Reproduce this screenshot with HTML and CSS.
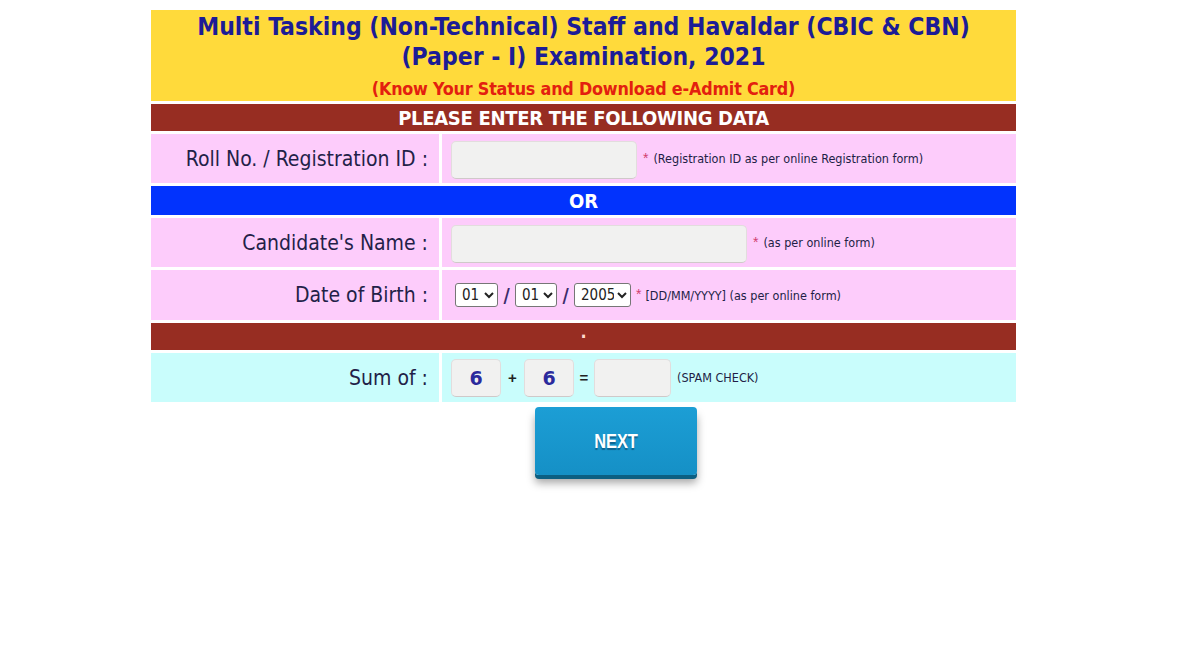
FILE: index.html
```html
<!DOCTYPE html>
<html lang="en">
<head>
<meta charset="utf-8">
<title>MTS Examination 2021 - e-Admit Card</title>
<link rel="stylesheet" href="styles.css">
</head>
<body>
<div class="page">
  <div class="header">
    <div class="t1">Multi Tasking (Non-Technical) Staff and Havaldar (CBIC &amp; CBN)</div>
    <div class="t1">(Paper - I) Examination, 2021</div>
    <div class="t2">(Know Your Status and Download e-Admit Card)</div>
  </div>
  <div class="band brown">PLEASE ENTER THE FOLLOWING DATA</div>
  <div class="row pink">
    <div class="label">Roll No. / Registration ID :</div>
    <div class="value">
      <input class="field w-roll" type="text">
      <span class="star">*</span><span class="hint">(Registration ID as per online Registration form)</span>
    </div>
  </div>
  <div class="band blue">OR</div>
  <div class="row pink">
    <div class="label">Candidate's Name :</div>
    <div class="value">
      <input class="field w-name" type="text">
      <span class="star">*</span><span class="hint">(as per online form)</span>
    </div>
  </div>
  <div class="row pink tall">
    <div class="label">Date of Birth :</div>
    <div class="value dob">
      <select class="sel s-day"><option>01</option></select>
      <span class="slash">/</span>
      <select class="sel s-mon"><option>01</option></select>
      <span class="slash">/</span>
      <select class="sel s-year"><option>2005</option></select>
      <span class="star">*</span><span class="hint">[DD/MM/YYYY] (as per online form)</span>
    </div>
  </div>
  <div class="band brown dotband">.</div>
  <div class="row cyan">
    <div class="label">Sum of :</div>
    <div class="value sum">
      <input class="field num" type="text" value="6" readonly>
      <span class="op">+</span>
      <input class="field num" type="text" value="6" readonly>
      <span class="op">=</span>
      <input class="field w-ans" type="text">
      <span class="hint spam">(SPAM CHECK)</span>
    </div>
  </div>
  <div class="actions">
    <button class="next" type="button"><span class="next-text">NEXT</span></button>
  </div>
</div>
</body>
</html>
```
FILE: styles.css
```css
body {
  margin: 0;
  background: #ffffff;
  font-family: "DejaVu Sans Condensed", "DejaVu Sans", sans-serif;
}

.page {
  width: 865px;
  margin-left: 151px;
  padding-top: 10px;
  display: flex;
  flex-direction: column;
  gap: 3px;
}

.header {
  box-sizing: border-box;
  height: 91px;
  padding-top: 2px;
  background: #ffda3b;
  text-align: center;
}

.t1 {
  font-family: "DejaVu Sans Condensed", "DejaVu Sans", sans-serif;
  font-stretch: condensed;
  font-weight: bold;
  font-size: 24.5px;
  line-height: 30px;
  color: #1c1c96;
}

.t2 {
  padding-top: 5px;
  font-family: "DejaVu Sans Condensed", "DejaVu Sans", sans-serif;
  font-stretch: condensed;
  font-weight: bold;
  font-size: 17.8px;
  letter-spacing: -0.2px;
  line-height: 24px;
  color: #e3200f;
}

.band {
  height: 27px;
  display: flex;
  align-items: center;
  justify-content: center;
  color: #ffffff;
  font-weight: bold;
}

.brown {
  background: #972d22;
  font-family: "DejaVu Sans Condensed", "DejaVu Sans", sans-serif;
  font-stretch: condensed;
  font-size: 20px;
  letter-spacing: -0.3px;
}

.blue {
  height: 29px;
  background: #0233fd;
  font-family: "DejaVu Sans Condensed", "DejaVu Sans", sans-serif;
  font-stretch: condensed;
  font-size: 20px;
}

.dotband {
  align-items: flex-start;
  font-size: 18px;
  line-height: 18px;
  color: #ffd9cc;
}

.row {
  height: 49px;
  display: grid;
  grid-template-columns: 288px 1fr;
  gap: 3px;
}

.row.tall {
  height: 50px;
}

.pink .label,
.pink .value {
  background: #fdccfb;
}

.cyan .label,
.cyan .value {
  background: #c9fdfc;
}

.label {
  display: flex;
  align-items: center;
  justify-content: flex-end;
  padding-right: 11px;
  font-family: "DejaVu Sans Condensed", "DejaVu Sans", sans-serif;
  font-stretch: condensed;
  font-size: 21px;
  color: #231f48;
}

.value {
  display: flex;
  align-items: center;
  padding-left: 9px;
}

.field {
  box-sizing: border-box;
  height: 38px;
  margin: 0;
  padding: 0 6px;
  background: #f1f1f0;
  border: 1px solid #e2dddd;
  border-bottom-color: #cfc9c9;
  border-radius: 5px;
  outline: none;
}

.w-roll { width: 186px; margin-top: 3px; }
.w-name { width: 296px; margin-top: 3px; }
.w-ans { width: 77px; }

.num {
  width: 50px;
  text-align: center;
  font-family: "DejaVu Sans", sans-serif;
  font-weight: bold;
  font-size: 19px;
  color: #2b2a9c;
}

.star {
  margin-left: 6px;
  margin-right: 5px;
  font-family: "Liberation Sans", Arial, sans-serif;
  font-size: 14px;
  color: #d0406e;
  align-self: center;
  margin-top: -2px;
}

.hint {
  font-family: "DejaVu Sans Condensed", "DejaVu Sans", sans-serif;
  font-stretch: condensed;
  font-size: 12.5px;
  color: #221e46;
}

.dob .s-day { margin-left: 4px; }

.sel {
  box-sizing: border-box;
  height: 24px;
  font-family: "DejaVu Sans Condensed", "DejaVu Sans", sans-serif;
  font-stretch: condensed;
  font-size: 15px;
  color: #222;
  background-color: #ffffff;
  border: 1px solid #767676;
  border-radius: 3px;
  padding: 0 0 0 2px;
}

.s-day { width: 43px; }
.s-mon { width: 42px; }
.s-year { width: 57px; }

.slash {
  width: 17px;
  text-align: center;
  font-size: 19px;
  font-weight: bold;
  color: #3a2a6a;
}

.dob .star { margin-left: 5px; margin-right: 4px; }

.op {
  width: 23px;
  text-align: center;
  font-family: "Liberation Sans", Arial, sans-serif;
  font-size: 15px;
  font-weight: bold;
  color: #222;
}

.sum .op:nth-of-type(2) { width: 20px; }

.spam {
  margin-left: 6px;
}

.actions {
  display: flex;
  padding-left: 384px;
  padding-top: 2px;
  padding-bottom: 20px;
}

.next {
  width: 162px;
  height: 68px;
  border: none;
  border-radius: 4px;
  background: linear-gradient(#1c9ed5, #1590c6);
  box-shadow: 0 4px 0 #0c5f82, 0 8px 9px rgba(0, 0, 0, 0.35);
  color: #ffffff;
  font-family: "Liberation Sans", Arial, sans-serif;
  font-weight: bold;
  font-size: 21px;
  text-shadow: 0 2px 1px rgba(0, 40, 70, 0.45);
  cursor: pointer;
}

.next-text {
  display: inline-block;
  transform: scaleX(0.78);
}
```
